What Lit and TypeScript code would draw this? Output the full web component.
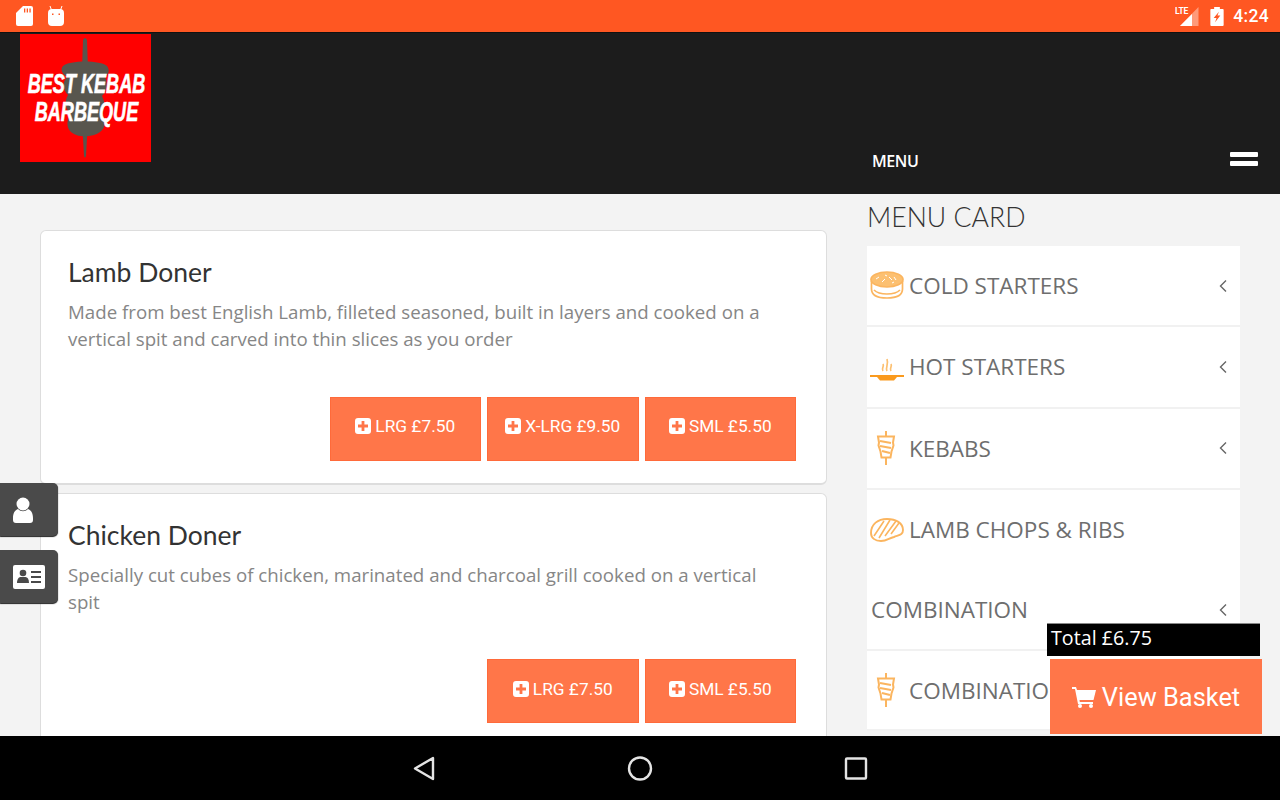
import { LitElement, html, css } from "lit";
import { customElement } from "lit/decorators.js";

const plus = html`<svg class="plus" viewBox="0 0 16 16"><path fill="#fff" fill-rule="evenodd" d="M3 0h10a3 3 0 0 1 3 3v10a3 3 0 0 1-3 3H3a3 3 0 0 1-3-3V3a3 3 0 0 1 3-3zM6.600 3v3.600H3v2.800h3.600V13h2.800V9.400H13V6.600H9.400V3z"/></svg>`;

const kebabIcon = html`<svg class="ico" viewBox="0 0 34 34" fill="none"><path d="M16 0v34" stroke="#fbb55f" stroke-width="2"/><path d="M8 5.500h16l-1 6 .5 3-2 6-1 6h-9l-1-6-2-6 .5-3z" stroke="#fbb55f" stroke-width="2" fill="#fff"/><path d="M10 10l11 2M10 15l11 2M12 20l8 2" stroke="#fbb55f" stroke-width="2.200"/></svg>`;
const bowl = html`<svg class="ico" viewBox="0 0 34 34" fill="none" stroke="#fbb55f" stroke-width="1.700"><path d="M1.500 12v8c0 7 7 9 15.500 9s15.500-2 15.500-9v-8" /><path d="M4 21c3 3 8 4 13 4s10-1 13-4"/><ellipse cx="17" cy="10.500" rx="16" ry="7.500" fill="#fcc071" stroke="#fbb55f"/><path d="M6 10l3-2M12 13l3-3M19 8l3 3M26 11l-2-3M15 6l2 1M22 14l2-1" stroke="#fff" stroke-width="1"/></svg>`;
const hot = html`<svg class="ico" viewBox="0 0 34 34" fill="none"><path d="M13 21c-2-3 1.500-4 0-7M17 21c-2-4 2-6 0-12M21 21c-2-3 1.500-4 0-7" stroke="#fcc071" stroke-width="1.700"/><path d="M0 25h34v2H0z" fill="#fa9a1e"/><path d="M7 27h20l-3 3.500H10z" fill="#fa9a1e"/></svg>`;
const chop = html`<svg class="ico" viewBox="0 0 34 34" fill="none" stroke="#fbb55f" stroke-width="1.900"><path d="M1 21c0-9 7-14 16-14 9 0 16 4 16 11 0 5-4 5-9 7-5 1-7 4-13 4-6 0-10-3-10-8z"/><path d="M4 24L14 9M9 26L20 8M15 24L26 9M21 22l8-11" stroke-width="1.600"/></svg>`;

const chevron = html`<svg class="chev" viewBox="0 0 10 14"><path d="M8 1.500L2.500 7 8 12.500" fill="none" stroke="#666" stroke-width="1.400"/></svg>`;

const menu = [
  { n: "COLD STARTERS", i: bowl, c: true },
  { n: "HOT STARTERS", i: hot, c: true },
  { n: "KEBABS", i: kebabIcon, c: true },
  { n: "LAMB CHOPS & RIBS", i: chop, c: false, nb: true },
  { n: "COMBINATION", i: null, c: true },
  { n: "COMBINATION", i: kebabIcon, c: false },
];

@customElement("app-root")
export class AppRoot extends LitElement {
  static styles = css`
    :host { display: block; width: 1280px; height: 800px; overflow: hidden; position: relative; background: #f3f3f3; font-family: "Open Sans", sans-serif; }
    .status { height: 32px; background: #ff5722; display: flex; align-items: center; padding: 0 11px 0 16px; box-sizing: border-box; color: #fff; }
    .status .l { display: flex; gap: 15px; align-items: center; flex: 1; margin-bottom: 1px; }
    .status .r { display: flex; align-items: center; }
    .time { font: 500 17.500px Roboto, sans-serif; margin-left: 9px; letter-spacing: .3px; }
    .head { height: 162px; background: #1c1c1c; position: relative; border-top: 1px solid #111; box-sizing: border-box; }
    .logo { position: absolute; left: 20px; top: 1px; width: 131px; height: 128px; background: #f00; overflow: hidden; }
    .logo svg { position: absolute; left: 0; top: 0; }
    .logo .t { position: absolute; left: 0; right: 0; top: 36px; text-align: center; color: #fff; font: italic 700 27px/28px "Liberation Sans", sans-serif; -webkit-text-stroke: .6px #fff; transform: scaleX(.67); white-space: nowrap; margin: 0 -29px 0 -27px; }
    .navlabel { position: absolute; left: 872px; top: 117px; color: #fff; font: 600 16px "Open Sans", sans-serif; letter-spacing: -.4px; }
    .burger { position: absolute; left: 1230px; top: 119px; width: 28px; height: 14px; display: flex; flex-direction: column; justify-content: space-between; }
    .burger i { display: block; height: 5px; background: #fff; border-radius: 1px; }
    .main { height: 542px; display: grid; grid-template-columns: 787px 373px; column-gap: 40px; padding-left: 40px; overflow: hidden; }
    .cards { padding-top: 36px; display: flex; flex-direction: column; gap: 7.500px; }
    .card { background: #fff; border: 1px solid #ddd; border-bottom-width: 2px; border-radius: 6px; padding: 23px 30px 23px 27px; box-sizing: border-box; flex: none; }
    .card.a { height: 255px; }
    .card.b { height: 300px; }
    h2 { margin: 0; font: 400 26.500px/36px "Lato", sans-serif; color: #333; }
    p { margin: 8px 0 0; width: 715px; font: 400 18.700px/27px "Open Sans", sans-serif; color: #868686; height: 96px; }
    .btns { display: flex; justify-content: flex-end; gap: 6px; margin-top: 2.700px; }
    .btn { width: 151.500px; height: 64px; background: #ff7649; border: 1px solid #ff6a3a; box-sizing: border-box; color: #fff; font: 400 17.300px Roboto, sans-serif; display: flex; align-items: center; justify-content: center; gap: 4px; padding-bottom: 5px; }
    .plus { width: 16px; height: 16px; }
    .side h1 { margin: 0; font: 300 26.700px/36px "Lato", sans-serif; color: #333; padding-top: 5px; height: 52px; box-sizing: border-box; }
    .list { background: #fff; }
    .item { height: 81.300px; display: flex; align-items: center; border-bottom: 2px solid #f1f1f1; box-sizing: border-box; padding: 0 12px 0 3px; font: 400 22.500px "Open Sans", sans-serif; color: #6e6e6e; }
    .item.nb { border-bottom: none; padding-bottom: 2px; height: 80.500px; }
    .item.nb ~ .item { height: 80.500px; }
    .item span { flex: 1; white-space: nowrap; }
    .item.plain { padding-left: 4px; }
    .ico { width: 34px; height: 34px; margin-right: 5px; flex: none; }
    .chev { width: 10px; height: 14px; flex: none; }
    .nav { height: 64px; background: #000; display: flex; align-items: center; justify-content: center; gap: 176px; }
    .nav svg { width: 40px; height: 40px; }
    .sidebtn { position: absolute; left: 0; width: 58px; height: 53px; background: #4a4a4a; border-radius: 0 5px 5px 0; box-shadow: 0 1px 1px #222; display: flex; align-items: center; padding-left: 13px; box-sizing: border-box; }
    .s1 { top: 483px; }
    .s2 { top: 550px; }
    .total { position: absolute; left: 1047px; top: 623px; width: 213px; height: 33px; background: #000; border-top: 1px solid #888; box-sizing: border-box; color: #fff; font: 400 19.700px/28px "Open Sans", sans-serif; padding-left: 4px; }
    .basket { position: absolute; left: 1050px; top: 659px; width: 212px; height: 75px; background: #ff7649; color: #fff; font: 400 25.400px Roboto, sans-serif; display: flex; align-items: center; justify-content: center; gap: 6px; }
  `;

  render() {
    return html`
      <div class="status">
        <div class="l">
          <svg width="17" height="20" viewBox="0 0 17 20"><path fill="#fff" d="M7 0h8a2 2 0 0 1 2 2v16a2 2 0 0 1-2 2H2a2 2 0 0 1-2-2V7z"/><path d="M8 2.500h1.300v4H8zM10.700 2.500H12v4h-1.300zM13.400 2.500h1.300v4h-1.300z" fill="#ff5722"/></svg>
          <svg width="16" height="20" viewBox="0 0 16 20"><path d="M3.500 4L2 0M12.500 4L14 0" stroke="#fff" stroke-width="1"/><path fill="#fff" fill-rule="evenodd" d="M4 3h8a4 4 0 0 1 4 4v9a4 4 0 0 1-4 4H4a4 4 0 0 1-4-4V7a4 4 0 0 1 4-4zM4 7.500v1.500h1.500V7.500zM10.500 7.500v1.500H12V7.500z"/></svg>
        </div>
        <div class="r">
          <svg width="24" height="22" viewBox="0 0 24 22"><path d="M23.500 2v19H5z" fill="#fff" opacity=".4"/><path d="M17 9v12H5z" fill="#fff"/><text x="0" y="9" fill="#fff" font-family="Roboto" font-weight="700" font-size="8.500" letter-spacing="-.2">LTE</text></svg>
          <svg width="14" height="19" viewBox="0 0 14 20" style="margin-left:11px"><path fill="#fff" fill-rule="evenodd" d="M4 0h6v2h3a1 1 0 0 1 1 1v16a1 1 0 0 1-1 1H1a1 1 0 0 1-1-1V3a1 1 0 0 1 1-1h3zM9 5L3.500 11.500h3L5 16l5.500-7H7.500z"/></svg>
          <span class="time">4:24</span>
        </div>
      </div>
      <div class="head">
        <div class="logo">
          <svg width="131" height="128" viewBox="0 0 131 128">
            <g fill="#58564e">
              <path d="M63 6q2-4 4 0l1 30h-6zM62.500 95h5l-1.500 27q-1 3-2 0z"/>
              <path d="M43 32c6-6 38-6 44 0 3 4 2 8-2 11 3 6 2 14-3 19 4 8 3 14-2 18 6 6 6 14 0 18-8 6-24 6-30-1-4-5-3-12 1-17-6-5-7-12-3-19-5-5-6-13-1-18-5-3-7-8-4-11z"/>
            </g>
          </svg>
          <div class="t">BEST KEBAB<br />BARBEQUE</div>
        </div>
        <div class="navlabel">MENU</div>
        <div class="burger"><i></i><i></i></div>
      </div>
      <div class="main">
        <div class="cards">
          <div class="card a">
            <h2>Lamb Doner</h2>
            <p>Made from best English Lamb, filleted seasoned, built in layers and cooked on a vertical spit and carved into thin slices as you order</p>
            <div class="btns">
              <div class="btn">${plus}LRG £7.50</div>
              <div class="btn">${plus}X-LRG £9.50</div>
              <div class="btn">${plus}SML £5.50</div>
            </div>
          </div>
          <div class="card b">
            <h2>Chicken Doner</h2>
            <p>Specially cut cubes of chicken, marinated and charcoal grill cooked on a vertical spit</p>
            <div class="btns">
              <div class="btn">${plus}LRG £7.50</div>
              <div class="btn">${plus}SML £5.50</div>
            </div>
          </div>
        </div>
        <div class="side">
          <h1>MENU CARD</h1>
          <div class="list">
            ${menu.map(
              (m) => html`<div class="item ${m.nb ? "nb" : ""} ${m.i ? "" : "plain"}">
                ${m.i}<span>${m.n}</span>${m.c ? chevron : ""}
              </div>`
            )}
          </div>
        </div>
      </div>
      <div class="nav">
        <svg viewBox="0 0 40 40"><path d="M29 10v21L11 20.500z" fill="none" stroke="#e4e4e4" stroke-width="2.400" stroke-linejoin="round"/></svg>
        <svg viewBox="0 0 40 40"><circle cx="20" cy="20.500" r="11" fill="none" stroke="#e4e4e4" stroke-width="2.400"/></svg>
        <svg viewBox="0 0 40 40"><rect x="10" y="10.500" width="20" height="20" rx="1" fill="none" stroke="#e4e4e4" stroke-width="2.400"/></svg>
      </div>
      <div class="sidebtn s1">
        <svg width="20" height="26" viewBox="0 0 20 26"><circle cx="10" cy="7" r="6.500" fill="#fff"/><path fill="#fff" d="M5 12c3 3 7 3 10 0 3 1 5 4 5 9v2a3 3 0 0 1-3 3H3a3 3 0 0 1-3-3v-2c0-5 2-8 5-9z"/></svg>
      </div>
      <div class="sidebtn s2">
        <svg width="32" height="24" viewBox="0 0 32 24"><path fill="#fff" d="M2 0h28a2 2 0 0 1 2 2v20a2 2 0 0 1-2 2H2a2 2 0 0 1-2-2V2a2 2 0 0 1 2-2z"/><circle cx="10" cy="8" r="3.300" fill="#4a4a4a"/><path d="M4 18c0-4 2-6 3.500-6h5c2 0 3.500 2 3.500 6z" fill="#4a4a4a"/><path d="M18 6h10v2H18zM18 11h10v2H18zM18 16h10v2H18z" fill="#4a4a4a"/></svg>
      </div>
      <div class="total">Total £6.75</div>
      <div class="basket">
        <svg width="24" height="22" viewBox="0 0 24 22"><path fill="#fff" d="M0 1h4l1 3h19l-2.500 10H7.500l.3 2H21v2H6L3 3H0z"/><circle cx="8" cy="20" r="2" fill="#fff"/><circle cx="19" cy="20" r="2" fill="#fff"/></svg>
        <span>View Basket</span>
      </div>
    `;
  }
}
